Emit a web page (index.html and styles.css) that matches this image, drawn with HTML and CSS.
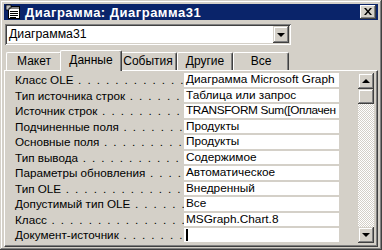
FILE: index.html
```html
<!DOCTYPE html>
<html lang="ru">

<head>
  <meta charset="UTF-8" />
  <title>Диаграмма: Диаграмма31</title>
  <link rel="stylesheet" href="styles.css">
</head>

<body>
  <div class="window">
    <div class="titlebar">
      <svg class="appIcon" width="16" height="16" viewBox="0 0 16 16">
        <rect x="3.5" y="2.5" width="11" height="12" fill="#fff" stroke="#000" stroke-width="1" />
        <rect x="4" y="3" width="10" height="2" fill="#808080" />
        <path d="M5 7.5h8M5 9.5h8M5 11.5h8M5 13.5h6" stroke="#000" stroke-width="1" />
        <path d="M1 1h5v3h-2v2h-3z" fill="#c0c0c0" stroke="#000" stroke-width="0.8" />
      </svg>
      <span class="title">Диаграмма: Диаграмма31</span>
      <div class="closeBtn">
        <svg width="8" height="7" viewBox="0 0 8 7">
          <path d="M0 0h2l2 2.5 2-2.5h2l-3 3.5 3 3.5h-2l-2-2.5-2 2.5h-2l3-3.5z" fill="#000" />
        </svg>
      </div>
    </div>

    <div class="combo">
      <div class="comboText">Диаграмма31</div>
      <div class="btn3d comboBtn"><span class="arrowDown"></span></div>
    </div>

    <div class="tabs">
      <div class="tab tabMaket">Макет</div>
      <div class="tab tabActive">Данные</div>
      <div class="tab tabEvents">События</div>
      <div class="tab tabOther">Другие</div>
      <div class="tab tabAll">Все</div>
    </div>

    <div class="panel">
      <div class="props">
        <div class="label">Класс OLE</div><div class="value">Диаграмма Microsoft Graph</div>
        <div class="label">Тип источника строк</div><div class="value">Таблица или запрос</div>
        <div class="label">Источник строк</div><div class="value tight">TRANSFORM Sum([Оплачен</div>
        <div class="label">Подчиненные поля</div><div class="value">Продукты</div>
        <div class="label">Основные поля</div><div class="value">Продукты</div>
        <div class="label">Тип вывода</div><div class="value">Содержимое</div>
        <div class="label">Параметры обновления</div><div class="value">Автоматическое</div>
        <div class="label">Тип OLE</div><div class="value">Внедренный</div>
        <div class="label">Допустимый тип OLE</div><div class="value">Все</div>
        <div class="label">Класс</div><div class="value">MSGraph.Chart.8</div>
        <div class="label">Документ-источник</div><div class="value"><span class="caret"></span></div>
      </div>

      <div class="scrollbar">
        <div class="btn3d scrollBtn"><span class="arrowUp"></span></div>
        <div class="btn3d thumb"></div>
        <div class="track"></div>
        <div class="btn3d scrollBtn"><span class="arrowDown"></span></div>
      </div>
    </div>
  </div>
</body>

</html>
```

FILE: styles.css
```css
* {
  padding: 0;
  margin: 0;
  box-sizing: border-box;
}

body {
  width: 382px;
  height: 250px;
  background: #d4d0c8;
  font-family: "Liberation Sans", Arial, sans-serif;
  font-size: 11.7px;
  color: #000;
  overflow: hidden;
}

.window {
  width: 382px;
  height: 250px;
  padding: 4px;
  background: #d4d0c8;
  box-shadow: inset -1px -1px #404040, inset 1px 1px #d4d0c8,
    inset -2px -2px #808080, inset 2px 2px #fff;
  display: flex;
  flex-direction: column;
}

/* title bar */
.titlebar {
  height: 18px;
  background: #0a246a;
  display: flex;
  align-items: center;
  padding: 0 2px 0 1px;
}

.appIcon {
  flex: none;
}

.title {
  color: #fff;
  font-weight: bold;
  font-size: 13px;
  margin-left: 4px;
  flex: 1;
  letter-spacing: 0.5px;
}

.closeBtn {
  width: 16px;
  height: 14px;
  background: #d4d0c8;
  box-shadow: inset -1px -1px #404040, inset 1px 1px #fff,
    inset -2px -2px #808080;
  display: flex;
  align-items: center;
  justify-content: center;
  padding-bottom: 1px;
}

/* raised button look */
.btn3d {
  background: #d4d0c8;
  box-shadow: inset -1px -1px #404040, inset 1px 1px #d4d0c8,
    inset -2px -2px #808080, inset 2px 2px #fff;
  display: flex;
  align-items: center;
  justify-content: center;
}

.arrowDown {
  width: 0;
  height: 0;
  border-left: 4px solid transparent;
  border-right: 4px solid transparent;
  border-top: 4px solid #000;
}

.arrowUp {
  width: 0;
  height: 0;
  border-left: 4px solid transparent;
  border-right: 4px solid transparent;
  border-bottom: 4px solid #000;
}

/* record selector */
.combo {
  margin: 4px 0 0 1px;
  width: 286px;
  height: 21px;
  background: #fff;
  padding: 2px;
  display: flex;
  box-shadow: inset 1px 1px #808080, inset -1px -1px #fff,
    inset 2px 2px #404040, inset -2px -2px #d4d0c8;
}

.comboText {
  flex: 1;
  line-height: 17px;
  padding-left: 2px;
  font-size: 12.3px;
}

.comboBtn {
  width: 16px;
  height: 17px;
}

/* tabs */
.tabs {
  display: flex;
  height: 20px;
  margin-top: 5px;
  padding-left: 2px;
  align-items: flex-end;
}

.tab {
  height: 18px;
  line-height: 17px;
  text-align: center;
  background: #d4d0c8;
  border-top: 1px solid #fff;
  border-left: 1px solid #fff;
  border-right: 1px solid #404040;
  border-radius: 2px 2px 0 0;
  box-shadow: inset -1px 0 #808080;
  font-size: 12px;
}

.tabMaket {
  width: 56px;
}

.tabEvents {
  width: 57px;
  border-left: none;
}

.tabOther {
  width: 56px;
}

.tabAll {
  width: 56px;
}

.tabActive {
  width: 62px;
  height: 21px;
  margin: 0 -2px -1px -2px;
  position: relative;
  z-index: 1;
  line-height: 18px;
}

/* property panel */
.panel {
  flex: 1;
  display: flex;
  padding: 2px 3px 2px 2px;
  border-top: 1px solid #fff;
  border-left: 1px solid #fff;
  border-right: 1px solid #404040;
  border-bottom: 1px solid #404040;
  box-shadow: inset -1px -1px #808080;
  margin-bottom: 1px;
}

.props {
  display: grid;
  grid-template-columns: 177px 155px;
  grid-auto-rows: 15.5px;
  align-content: start;
}

.label {
  padding-left: 8px;
  padding-right: 3px;
  line-height: 14px;
  white-space: nowrap;
  overflow: hidden;
}

.label::after {
  content: " . . . . . . . . . . . . . . . . . . . . . . . . . . . . . . . . . . . .";
  letter-spacing: 1.4px;
}

.value {
  background: #fff;
  height: 13.5px;
  line-height: 13px;
  padding-left: 2px;
  white-space: nowrap;
  overflow: hidden;
  font-size: 11.8px;
}

.tight {
  letter-spacing: -0.35px;
}

.caret {
  display: inline-block;
  width: 2px;
  height: 12px;
  background: #000;
  vertical-align: top;
  margin-top: 1px;
}

/* scrollbar */
.scrollbar {
  margin-left: auto;
  width: 16px;
  display: flex;
  flex-direction: column;
  margin-bottom: 1px;
}

.scrollBtn {
  height: 16px;
}

.thumb {
  height: 15px;
}

.track {
  flex: 1;
  background: repeating-conic-gradient(#fff 0 25%, #d4d0c8 0 50%) 0 0 / 2px 2px;
}
```
